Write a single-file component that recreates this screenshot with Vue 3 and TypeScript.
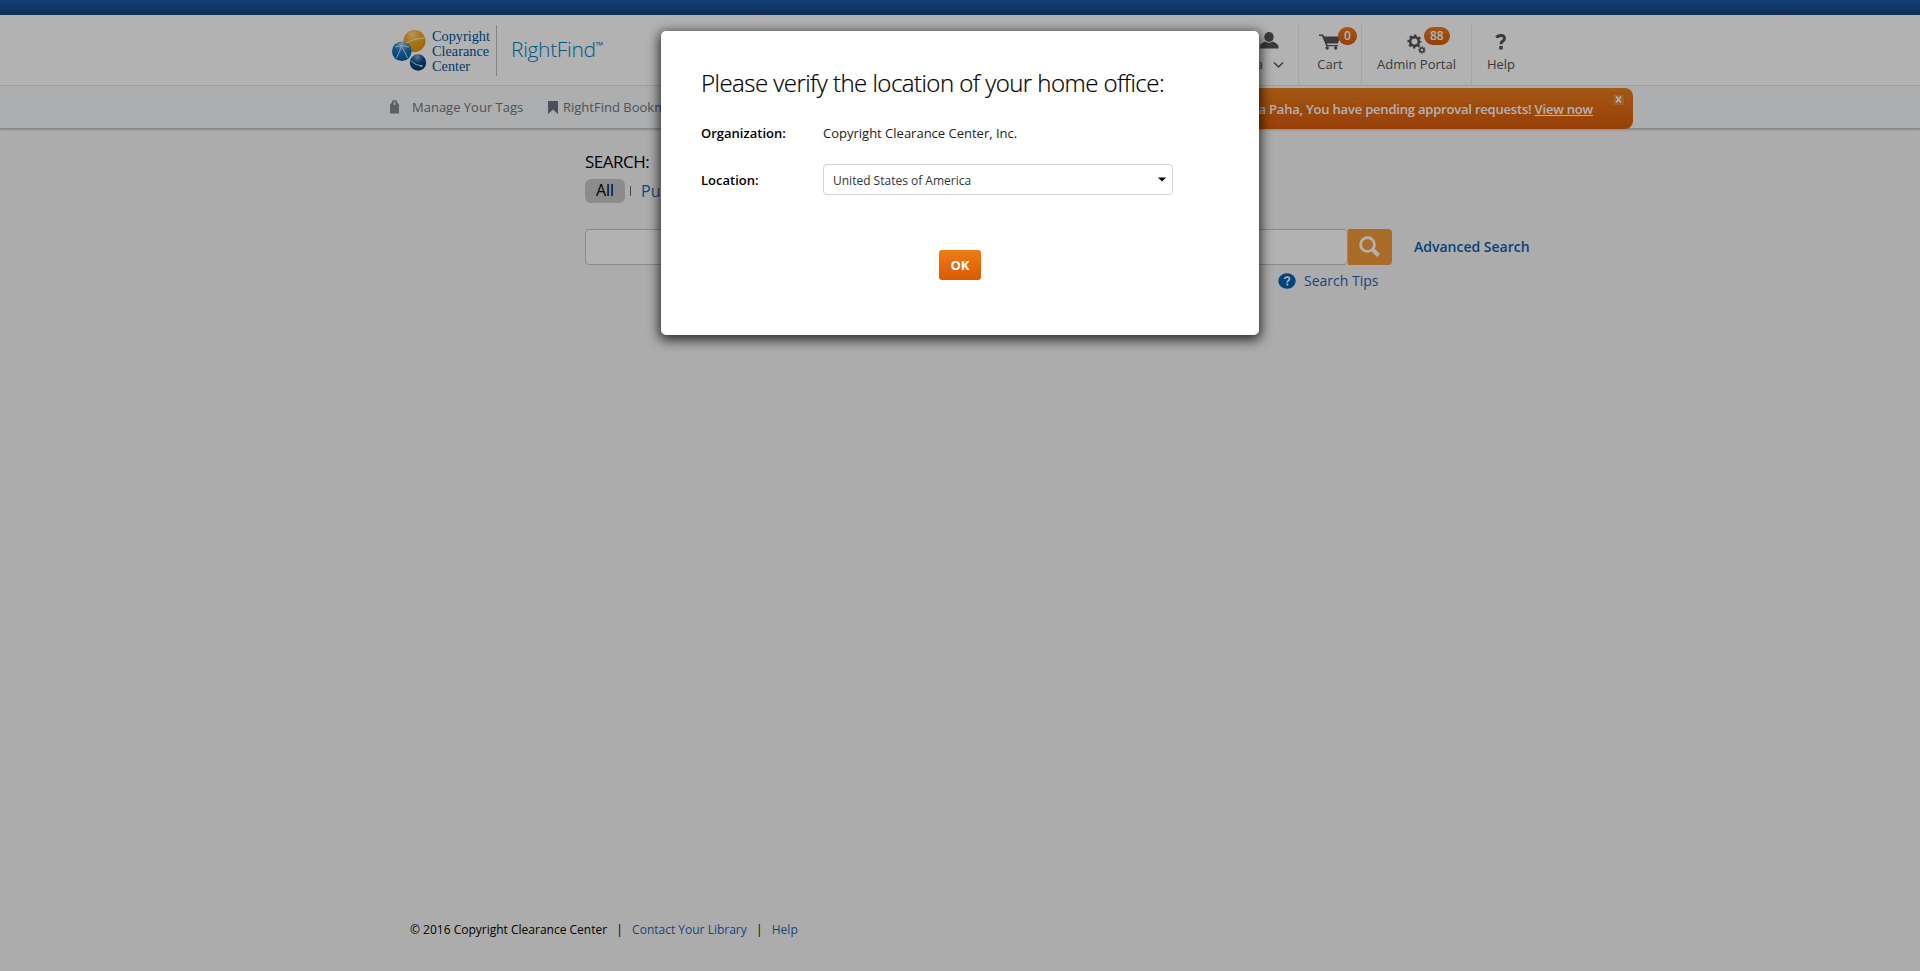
<script setup lang="ts">
import { ref } from 'vue'

const cartCount = ref<number>(0)
const pendingCount = ref<number>(88)
const country = ref<string>('United States of America')
const logoLines: string[] = ['Copyright', 'Clearance', 'Center']
</script>

<template>
  <div class="page">
    <div class="topbar"></div>
    <header class="header">
      <div class="brand">
        <svg class="spheres" width="35" height="42" viewBox="0 0 35 42">
          <defs>
            <radialGradient id="gold" cx=".4" cy=".2" r=".8"><stop offset="0" stop-color="#ffd98a" /><stop offset=".45" stop-color="#f7a823" /><stop offset="1" stop-color="#e29112" /></radialGradient>
            <radialGradient id="sky" cx=".5" cy=".1" r=".9"><stop offset="0" stop-color="#9fc5e6" /><stop offset=".5" stop-color="#1478c0" /><stop offset="1" stop-color="#005c9f" /></radialGradient>
            <radialGradient id="navy" cx=".45" cy=".15" r=".8"><stop offset="0" stop-color="#85a9d0" /><stop offset=".5" stop-color="#084b8d" /><stop offset="1" stop-color="#003a73" /></radialGradient>
          </defs>
          <circle cx="22.500" cy="11" r="11" fill="url(#gold)" />
          <path d="M13 14Q20 8.500 33 8" fill="none" stroke="#fff0cf" stroke-width="1" />
          <circle cx="9.800" cy="21.200" r="9.800" fill="url(#sky)" />
          <path d="M4.500 28Q8 21 10.500 13.500M15.500 28Q12 19 7.500 14M3 17Q9 14 17 17" fill="none" stroke="#d8ecfa" stroke-width=".9" />
          <circle cx="26" cy="32.500" r="8.200" fill="url(#navy)" />
          <path d="M19 31Q23 35.500 31 36" fill="none" stroke="#d8ecfa" stroke-width=".9" />
          <circle cx="29" cy="36" r="1.100" fill="#d8ecfa" />
        </svg>
        <div class="logo-text"><span v-for="line in logoLines" :key="line">{{ line }}</span></div>
        <div class="product">RightFind<sup>™</sup></div>
      </div>
      <nav class="tools">
        <div class="tool user">
          <svg class="user-icon" width="20" height="17" viewBox="0 0 20 17"><ellipse cx="10" cy="5" rx="4.700" ry="5" /><path d="M1 16.500V14Q2 11 6.500 9.500Q10 12 13.500 9.500Q18 11 19.500 14V16.500Z" /></svg>
          <span class="user-name">Barbara Paha</span>
          <svg class="chevron" width="11" height="8" viewBox="0 0 11 8"><path d="M1 1.500L5.500 6L10 1.500" fill="none" stroke="#555" stroke-width="1.500" /></svg>
        </div>
        <div class="tool cart">
          <svg class="cart-icon" width="22" height="16" viewBox="0 0 22 16"><path d="M0 .5H4L5.200 2.500H21L19 9.500H8L8.500 11H19V12.300H7.300L3 2H0Z" /><circle cx="8.200" cy="14" r="1.700" /><circle cx="16.700" cy="14" r="1.700" /></svg>
          <span class="badge">{{ cartCount }}</span>
          <span>Cart</span>
        </div>
        <div class="tool admin">
          <svg class="gears" width="20" height="20" viewBox="0 0 20 20"><circle cx="7.500" cy="7.500" r="4.300" fill="none" stroke="#555" stroke-width="2.700" /><circle cx="7.500" cy="7.500" r="6.100" fill="none" stroke="#555" stroke-width="2" stroke-dasharray="2.400 2.391" stroke-dashoffset="1.200" /><circle cx="15" cy="16" r="2" fill="none" stroke="#555" stroke-width="1.600" /><circle cx="15" cy="16" r="3" fill="none" stroke="#555" stroke-width="1.300" stroke-dasharray="1.250 1.106" stroke-dashoffset=".6" /></svg>
          <span class="badge">{{ pendingCount }}</span>
          <span>Admin Portal</span>
        </div>
        <div class="tool help">
          <svg class="question" width="12" height="16" viewBox="0 0 12 16"><path d="M1.200 3.400Q3.500 1.400 6 1.500Q9.500 1.600 9.500 4.300Q9.500 6 7.500 7.300Q6 8.300 6 10.200" fill="none" stroke="#555" stroke-width="3" /><rect x="4.200" y="12" width="3.600" height="3.500" /></svg>
          <span>Help</span>
        </div>
      </nav>
    </header>

    <div class="subnav">
      <svg class="bag" width="9" height="14" viewBox="0 0 9 14"><path d="M0 4.500L2 2.500H7L9 4.500V13.500H0Z" fill="#838a93" /><path d="M2.500 5V2.500Q2.500 .8 4.500 .8T6.500 2.500V5" fill="none" stroke="#838a93" stroke-width="1.400" /><circle cx="4.500" cy="4" r="1" fill="#f8fafc" /></svg>
      <span class="tags">Manage Your Tags</span>
      <svg class="bookmark" width="10" height="13" viewBox="0 0 10 13"><path d="M0 0H10V13L5 8.500L0 13Z" fill="#6b7380" /></svg>
      <span class="bookmarklet">RightFind Bookmarklet</span>
      <div class="notice">
        <span class="ghost location">My location &amp; language:</span>
        <svg class="ghost caret" width="9" height="6" viewBox="0 0 9 6"><path d="M1 1L4.500 4.500L8 1" fill="none" stroke="#703000" stroke-width="1.500" /></svg>
        <span class="ghost language">English</span>
        <span class="message">Barbara Paha, You have pending approval requests! <a>View now</a></span>
        <button class="dismiss"><svg width="7" height="7" viewBox="0 0 7 7"><path d="M1 .5L6 6.500M6 .5L1 6.500" stroke="#fff" stroke-width="1.700" /></svg></button>
      </div>
    </div>

    <main class="search">
      <div class="search-title">SEARCH:</div>
      <div class="filters"><span class="active">All</span><i></i><a>Pubs</a></div>
      <div class="search-row">
        <div class="query"></div>
        <button class="go"><svg width="22" height="22" viewBox="0 0 22 22"><circle cx="8.500" cy="8.500" r="6.900" fill="none" stroke="#fff" stroke-width="2.800" /><path d="M13.500 13.500L19.500 19.500" stroke="#fff" stroke-width="4" /></svg></button>
        <a class="advanced">Advanced Search</a>
      </div>
      <div class="tips">
        <svg width="18" height="16" viewBox="0 0 18 16"><ellipse cx="9" cy="8" rx="8.700" ry="7.700" fill="#0064b4" /><path d="M6.500 5.800Q7.300 4 9.200 4Q11.500 4.100 11.500 5.900Q11.500 7 10.200 7.700Q9.200 8.200 9.200 9.500" fill="none" stroke="#fff" stroke-width="1.700" /><rect x="8.300" y="10.500" width="1.900" height="1.900" fill="#fff" /></svg>
        <a>Search Tips</a>
      </div>
    </main>

    <footer class="footer"><span>© 2016 Copyright Clearance Center</span><b>|</b><a>Contact Your Library</a><b>|</b><a>Help</a></footer>

    <div class="overlay">
      <section class="modal">
        <h1>Please verify the location of your home office:</h1>
        <div class="field org"><label>Organization:</label><span>Copyright Clearance Center, Inc.</span></div>
        <div class="field loc">
          <label>Location:</label>
          <div class="select"><span>{{ country }}</span><svg width="8" height="5" viewBox="0 0 8 5"><path d="M0 .5H8L4 4.500Z" /></svg></div>
        </div>
        <button class="ok">OK</button>
      </section>
    </div>
  </div>
</template>

<style>
body { margin: 0; background: #f7f7f7; overflow: hidden; }
</style>

<style scoped>
.page { position: relative; width: 1920px; height: 971px; overflow: hidden; box-sizing: border-box; background: #f7f7f7; font-family: "Open Sans", sans-serif; font-size: 14px; color: #000; display: flex; flex-direction: column; }
.page * { box-sizing: border-box; }
svg { display: block; flex: none; }
button { border: 0; padding: 0; font-family: inherit; }
a { color: #285fb4; }
.topbar { height: 15px; flex: none; background: linear-gradient(#1c5baf, #174078); }
.header { height: 71px; flex: none; padding-left: 392px; display: flex; background: #fff; border-bottom: 1px solid #e6e6e6; }
.brand { width: 740px; display: flex; align-items: flex-start; }
.spheres { margin-top: 15px; }
.logo-text { display: flex; flex-direction: column; flex: none; width: 65px; height: 51px; margin: 10px 0 0 5px; padding-top: 4px; border-right: 1px solid #bbb; font: 14.3px/15px "Liberation Serif", serif; color: #005595; }
.logo-text span { white-space: nowrap; }
.product { margin: 20px 0 0 14px; font-size: 21px; line-height: 28px; font-weight: 300; letter-spacing: -.35px; color: #0080bd; white-space: nowrap; }
.product sup { font-size: 10px; line-height: 0; vertical-align: 8px; font-weight: 600; }
.tools { margin-left: auto; margin-right: 390px; padding-top: 10px; display: flex; height: 70px; font-size: 13px; line-height: 18px; color: #555; fill: #555; }
.tool { position: relative; display: flex; flex-direction: column; align-items: center; padding-top: 30px; border-right: 1px solid #eaeaea; }
.tool > svg { position: absolute; }
.user { width: 137px; align-items: flex-end; padding-right: 35px; }
.tools .user-icon { left: 97px; top: 7px; }
.tools .chevron { right: 14px; top: 36px; }
.cart { width: 63px; }
.tools .cart-icon { left: 20px; top: 9px; }
.admin { width: 110px; }
.tools .gears { left: 45px; top: 9px; }
.help { width: 58px; border: 0; }
.tools .question { left: 23px; top: 9px; }
.badge { position: absolute; top: 2px; height: 18px; padding: 0 6px; border-radius: 9px; background: linear-gradient(#ec7c1c, #d55c0c); color: #fff; font-size: 12px; font-weight: 600; line-height: 17px; }
.cart .badge { left: 39px; }
.admin .badge { left: 62px; }
.subnav { position: relative; height: 43px; flex: none; padding-left: 390px; display: flex; align-items: center; background: #f8fafc; border-bottom: 1px solid #c2c2c2; box-shadow: 0 1px 2px rgba(0, 0, 0, .2); color: #70747a; font-size: 13px; white-space: nowrap; }
.tags { width: 136px; margin-left: 13px; }
.bookmark { margin-right: 5px; }
.notice { position: absolute; left: 1130px; top: 2px; width: 503px; height: 41px; padding: 0 40px 0 0; display: flex; align-items: center; justify-content: flex-end; border-radius: 0 8px 8px 0; background: linear-gradient(#eb7f1d, #da5a0c); color: #fff; }
.message { position: relative; font-weight: 600; letter-spacing: -.2px; }
.notice a { color: #fff; text-decoration: underline; }
.dismiss { position: absolute; right: 8px; top: 5px; width: 13px; height: 13px; border: 1px solid #d77019; background: #e68c38; display: flex; align-items: center; justify-content: center; }
.ghost { position: absolute; top: 10px; color: #703000; opacity: .12; }
.location { left: 147px; }
.caret { left: 301px; top: 17px; }
.language { left: 335px; }
.search { padding: 21px 0 0 585px; flex: 1; }
.search-title { font-size: 17px; line-height: 24px; letter-spacing: -.5px; }
.filters { display: flex; align-items: center; height: 24px; margin-top: 5px; font-size: 16px; }
.active { width: 40px; height: 24px; border-radius: 6px; background: #cbc8c9; text-align: center; line-height: 23px; }
.filters i { width: 1px; height: 10px; margin: 0 10px 0 5px; background: #666; }
.search-row { display: flex; align-items: center; height: 36px; margin-top: 26px; }
.query { width: 763px; height: 36px; border: 1px solid #c4c4c4; border-radius: 4px; background: #fff; }
.go { width: 44px; height: 36px; border-radius: 0 4px 4px 0; background: #f79b3c; display: flex; align-items: center; justify-content: center; }
.advanced { margin-left: 22px; padding-bottom: 2px; color: #0a5cb0; font-weight: 600; }
.tips { display: flex; align-items: center; height: 20px; margin: 6px 0 0 693px; }
.tips a { margin-left: 8px; padding-bottom: 2px; }
.footer { height: 51px; padding-left: 410px; font-size: 12px; line-height: 20px; display: flex; }
.footer b { font-weight: 400; width: 25px; text-align: center; }
.overlay { position: absolute; inset: 0; background: rgba(0, 0, 0, .3); display: flex; align-items: flex-start; justify-content: center; padding-top: 31px; }
.modal { width: 598px; height: 304px; padding: 34px 40px 0; border-radius: 5px; background: #fff; box-shadow: 0 3px 12px 2px rgba(0, 0, 0, .75); display: flex; flex-direction: column; }
h1 { margin: 0; font-size: 24px; line-height: 36px; font-weight: 300; white-space: nowrap; letter-spacing: -.53px; -webkit-text-stroke: .2px #000; }
.field { display: flex; align-items: center; font-size: 13px; }
.field label { width: 122px; font-weight: 600; }
.org { height: 20px; margin-top: 22px; color: #222; }
.org label { color: #000; }
.loc { height: 31px; margin-top: 21px; }
.select { width: 350px; height: 31px; padding: 0 6px 0 9px; border: 1px solid #d2d2d2; border-radius: 4px; display: flex; align-items: center; justify-content: space-between; font-size: 12px; color: #333; }
.select span { padding-top: 2px; }
.ok { align-self: center; width: 42px; height: 30px; margin-top: 55px; border-radius: 3px; background: linear-gradient(#ec7d14, #db5800); color: #fff; font-size: 13px; font-weight: 700; }
</style>
